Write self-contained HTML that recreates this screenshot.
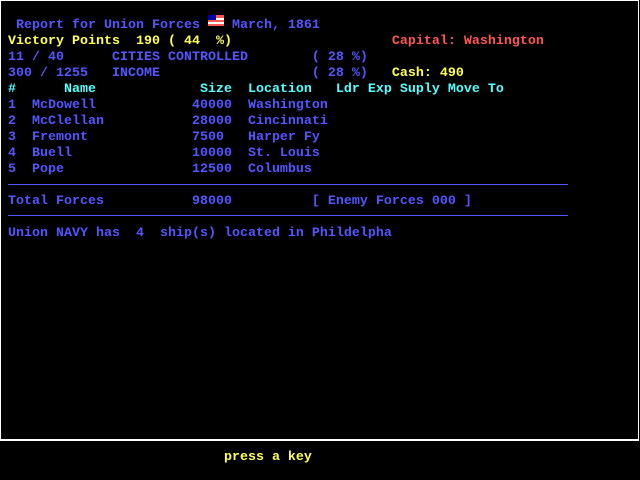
<!DOCTYPE html>
<html><head><meta charset="utf-8"><style>
body{margin:0;background:#000;width:640px;height:480px;overflow:hidden;position:relative}
.f{position:absolute;left:0;top:0;width:637px;height:438px;border:1px solid #fff;border-bottom-width:2px}
pre{position:absolute;left:0;margin:0;font-family:"Liberation Mono",monospace;font-size:13.33px;line-height:16px;color:#5555ff;font-weight:bold;white-space:pre}
.y{color:#ffff55}.c{color:#55ffff}.r{color:#ff5555}
.l{position:absolute;left:8px;width:560px;height:1px;background:#5555ff}
</style></head><body>
<div class="f"></div>
<pre style="top:18px">  Report for Union Forces    March, 1861
<span class="y"> Victory Points  190 ( 44  %)</span>                    <span class="r">Capital: Washington</span>
 11 / 40      CITIES CONTROLLED        ( 28 %)
 300 / 1255   INCOME                   ( 28 %)   <span class="y">Cash: 490</span>
<span class="c"> #      Name             Size  Location   Ldr Exp Suply Move To</span>
 1  McDowell            40000  Washington
 2  McClellan           28000  Cincinnati
 3  Fremont             7500   Harper Fy
 4  Buell               10000  St. Louis
 5  Pope                12500  Columbus</pre>
<svg style="position:absolute;left:208px;top:15px" width="16" height="11"><rect width="16" height="11" fill="#ff5555"/><rect y="3" width="16" height="2" fill="#fff"/><rect y="7" width="16" height="2" fill="#fff"/><rect width="8" height="5" fill="#0000aa"/></svg>
<div class="l" style="top:184px"></div>
<pre style="top:194px"> Total Forces           98000          [ Enemy Forces 000 ]</pre>
<div class="l" style="top:215px"></div>
<pre style="top:226px"> Union NAVY has  4  ship(s) located in Phildelpha</pre>
<pre style="top:450px" class="y">                            press a key</pre>
</body></html>
